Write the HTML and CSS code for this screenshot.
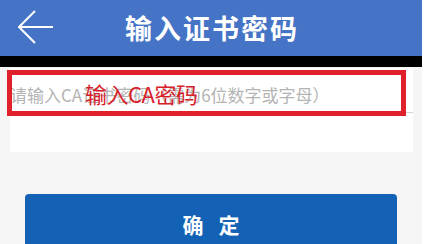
FILE: index.html
```html
<!DOCTYPE html>
<html lang="zh-CN">
<head>
    <meta charset="UTF-8">
    <title>输入证书密码</title>
    <link rel="stylesheet" href="styles.css">
</head>
<body>
    <div class="pantalla">
        <div class="cabecera">
            <svg class="volver" width="36" height="34" viewBox="0 0 36 34">
                <path d="M17 1 L1 17 L17 33 M1 17 L35 17" fill="none" stroke="#fff" stroke-width="2"/>
            </svg>
            <span class="titulo">输入证书密码</span>
        </div>
        <div class="barra"></div>

        <div class="panel">
            <div class="campo">
                <span class="placeholder">请输入CA证书密码（需为6位数字或字母）</span>
            </div>
            <div class="marca"></div>
            <span class="nota">输入CA密码</span>
        </div>

        <div class="boton">确 定</div>
    </div>
</body>
</html>
```

FILE: styles.css
```css
body {
    margin: 0;
    background-color: #fff;
    font-family: "Noto Sans CJK SC", "Noto Sans", sans-serif;
    overflow: hidden;
}
.pantalla {
    width: 422px;
    height: 244px;
    background-color: #f5f5f5;
    overflow: hidden;
}
.cabecera {
    height: 56px;
    background-color: #4573c6;
    display: flex;
    align-items: center;
    justify-content: center;
    position: relative;
}
.volver {
    position: absolute;
    left: 18px;
    top: 10px;
}
.titulo {
    color: #fff;
    font-size: 27px;
    font-weight: bold;
    letter-spacing: 2px;
    margin-left: 2px;
    margin-top: -1px;
}
.barra {
    height: 11px;
    background-color: #000;
}
.panel {
    position: relative;
    margin: 1px 0 0 10px;
    width: 403px;
    height: 84px;
    background-color: #fff;
}
.campo {
    height: 44px;
    border-bottom: 1px solid #d4d4d4;
    display: flex;
    align-items: center;
}
.placeholder {
    color: #b4b4b4;
    font-size: 17px;
    margin-left: 0;
    margin-top: 9px;
    white-space: nowrap;
}
.marca {
    position: absolute;
    left: -3px;
    top: 2px;
    width: 389px;
    height: 36px;
    border: 5px solid #e0202a;
}
.nota {
    position: absolute;
    left: 75px;
    top: 9px;
    color: #d8202a;
    font-size: 22px;
    line-height: 32px;
    letter-spacing: -0.5px;
}
.boton {
    margin: 42px 0 0 25px;
    width: 372px;
    height: 60px;
    background-color: #1462b6;
    border-radius: 4px;
    color: #fff;
    font-size: 21px;
    font-weight: bold;
    display: flex;
    justify-content: center;
    align-items: center;
    word-spacing: 10px;
}
```
